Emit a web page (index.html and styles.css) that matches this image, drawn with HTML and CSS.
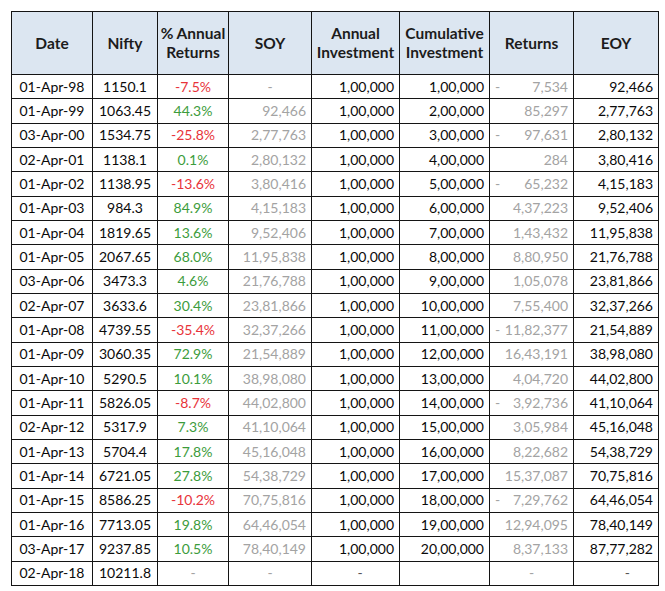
FILE: index.html
```html
<!DOCTYPE html>
<html>
<head>
<meta charset="utf-8">
<link rel="stylesheet" href="styles.css">
</head>
<body>
<table class="sip">
  <colgroup>
    <col class="c-date"><col class="c-nifty"><col class="c-pct"><col class="c-soy">
    <col class="c-ann"><col class="c-cum"><col class="c-ret"><col class="c-eoy">
  </colgroup>
  <thead>
    <tr>
      <th>Date</th><th>Nifty</th><th>% Annual<br>Returns</th><th>SOY</th>
      <th>Annual<br>Investment</th><th>Cumulative<br>Investment</th><th>Returns</th><th>EOY</th>
    </tr>
  </thead>
  <tbody>
    <tr><td class="ctr">01-Apr-98</td><td class="ctr">1150.1</td><td class="ctr neg">-7.5%</td><td class="ctr gray">-</td><td class="num">1,00,000</td><td class="num">1,00,000</td><td class="num gray"><span class="acc"><span>-</span><span>7,534</span></span></td><td class="num">92,466</td></tr>
    <tr><td class="ctr">01-Apr-99</td><td class="ctr">1063.45</td><td class="ctr pos">44.3%</td><td class="num gray">92,466</td><td class="num">1,00,000</td><td class="num">2,00,000</td><td class="num gray">85,297</td><td class="num">2,77,763</td></tr>
    <tr><td class="ctr">03-Apr-00</td><td class="ctr">1534.75</td><td class="ctr neg">-25.8%</td><td class="num gray">2,77,763</td><td class="num">1,00,000</td><td class="num">3,00,000</td><td class="num gray"><span class="acc"><span>-</span><span>97,631</span></span></td><td class="num">2,80,132</td></tr>
    <tr><td class="ctr">02-Apr-01</td><td class="ctr">1138.1</td><td class="ctr pos">0.1%</td><td class="num gray">2,80,132</td><td class="num">1,00,000</td><td class="num">4,00,000</td><td class="num gray">284</td><td class="num">3,80,416</td></tr>
    <tr><td class="ctr">01-Apr-02</td><td class="ctr">1138.95</td><td class="ctr neg">-13.6%</td><td class="num gray">3,80,416</td><td class="num">1,00,000</td><td class="num">5,00,000</td><td class="num gray"><span class="acc"><span>-</span><span>65,232</span></span></td><td class="num">4,15,183</td></tr>
    <tr><td class="ctr">01-Apr-03</td><td class="ctr">984.3</td><td class="ctr pos">84.9%</td><td class="num gray">4,15,183</td><td class="num">1,00,000</td><td class="num">6,00,000</td><td class="num gray">4,37,223</td><td class="num">9,52,406</td></tr>
    <tr><td class="ctr">01-Apr-04</td><td class="ctr">1819.65</td><td class="ctr pos">13.6%</td><td class="num gray">9,52,406</td><td class="num">1,00,000</td><td class="num">7,00,000</td><td class="num gray">1,43,432</td><td class="num">11,95,838</td></tr>
    <tr><td class="ctr">01-Apr-05</td><td class="ctr">2067.65</td><td class="ctr pos">68.0%</td><td class="num gray">11,95,838</td><td class="num">1,00,000</td><td class="num">8,00,000</td><td class="num gray">8,80,950</td><td class="num">21,76,788</td></tr>
    <tr><td class="ctr">03-Apr-06</td><td class="ctr">3473.3</td><td class="ctr pos">4.6%</td><td class="num gray">21,76,788</td><td class="num">1,00,000</td><td class="num">9,00,000</td><td class="num gray">1,05,078</td><td class="num">23,81,866</td></tr>
    <tr><td class="ctr">02-Apr-07</td><td class="ctr">3633.6</td><td class="ctr pos">30.4%</td><td class="num gray">23,81,866</td><td class="num">1,00,000</td><td class="num">10,00,000</td><td class="num gray">7,55,400</td><td class="num">32,37,266</td></tr>
    <tr><td class="ctr">01-Apr-08</td><td class="ctr">4739.55</td><td class="ctr neg">-35.4%</td><td class="num gray">32,37,266</td><td class="num">1,00,000</td><td class="num">11,00,000</td><td class="num gray"><span class="acc"><span>-</span><span>11,82,377</span></span></td><td class="num">21,54,889</td></tr>
    <tr><td class="ctr">01-Apr-09</td><td class="ctr">3060.35</td><td class="ctr pos">72.9%</td><td class="num gray">21,54,889</td><td class="num">1,00,000</td><td class="num">12,00,000</td><td class="num gray">16,43,191</td><td class="num">38,98,080</td></tr>
    <tr><td class="ctr">01-Apr-10</td><td class="ctr">5290.5</td><td class="ctr pos">10.1%</td><td class="num gray">38,98,080</td><td class="num">1,00,000</td><td class="num">13,00,000</td><td class="num gray">4,04,720</td><td class="num">44,02,800</td></tr>
    <tr><td class="ctr">01-Apr-11</td><td class="ctr">5826.05</td><td class="ctr neg">-8.7%</td><td class="num gray">44,02,800</td><td class="num">1,00,000</td><td class="num">14,00,000</td><td class="num gray"><span class="acc"><span>-</span><span>3,92,736</span></span></td><td class="num">41,10,064</td></tr>
    <tr><td class="ctr">02-Apr-12</td><td class="ctr">5317.9</td><td class="ctr pos">7.3%</td><td class="num gray">41,10,064</td><td class="num">1,00,000</td><td class="num">15,00,000</td><td class="num gray">3,05,984</td><td class="num">45,16,048</td></tr>
    <tr><td class="ctr">01-Apr-13</td><td class="ctr">5704.4</td><td class="ctr pos">17.8%</td><td class="num gray">45,16,048</td><td class="num">1,00,000</td><td class="num">16,00,000</td><td class="num gray">8,22,682</td><td class="num">54,38,729</td></tr>
    <tr><td class="ctr">01-Apr-14</td><td class="ctr">6721.05</td><td class="ctr pos">27.8%</td><td class="num gray">54,38,729</td><td class="num">1,00,000</td><td class="num">17,00,000</td><td class="num gray">15,37,087</td><td class="num">70,75,816</td></tr>
    <tr><td class="ctr">01-Apr-15</td><td class="ctr">8586.25</td><td class="ctr neg">-10.2%</td><td class="num gray">70,75,816</td><td class="num">1,00,000</td><td class="num">18,00,000</td><td class="num gray"><span class="acc"><span>-</span><span>7,29,762</span></span></td><td class="num">64,46,054</td></tr>
    <tr><td class="ctr">01-Apr-16</td><td class="ctr">7713.05</td><td class="ctr pos">19.8%</td><td class="num gray">64,46,054</td><td class="num">1,00,000</td><td class="num">19,00,000</td><td class="num gray">12,94,095</td><td class="num">78,40,149</td></tr>
    <tr><td class="ctr">03-Apr-17</td><td class="ctr">9237.85</td><td class="ctr pos">10.5%</td><td class="num gray">78,40,149</td><td class="num">1,00,000</td><td class="num">20,00,000</td><td class="num gray">8,37,133</td><td class="num">87,77,282</td></tr>
    <tr><td class="ctr">02-Apr-18</td><td class="ctr">10211.8</td><td class="ctr gray">-</td><td class="ctr gray">-</td><td class="dash-ann">-</td><td></td><td class="ctr gray">-</td><td class="dash-eoy">-</td></tr>
  </tbody>
</table>
</body>
</html>
```

FILE: styles.css
```css
html, body {
  margin: 0;
  background: #ffffff;
}
body {
  padding: 11px 0 0 11px;
  font-family: Lato, "Open Sans", "Liberation Sans", sans-serif;
  font-size: 14px;
  color: #0a0a0a;
}
.sip {
  border-collapse: collapse;
  table-layout: fixed;
  width: 647px;
}
.c-date { width: 81px; }
.c-nifty { width: 65px; }
.c-pct { width: 71px; }
.c-soy { width: 83px; }
.c-ann { width: 88px; }
.c-cum { width: 90px; }
.c-ret { width: 84px; }
.c-eoy { width: 85px; }

.sip th, .sip td {
  border: 1px solid #141414;
  white-space: nowrap;
  overflow: hidden;
}
.sip thead tr {
  height: 63px;
}
.sip th {
  background: #dce6f1;
  padding: 0 1px;
  font-weight: 700;
  font-size: 15.5px;
  line-height: 19px;
  text-align: center;
  vertical-align: middle;
  color: #1c1c1c;
}
.sip tbody tr {
  height: 24.33px;
}
.sip td {
  padding: 0 5px;
  line-height: 18px;
  vertical-align: middle;
}
.ctr { text-align: center; }
.num { text-align: right; }
.gray { color: #a3a3a3; }
.neg { color: #e8333a; }
.pos { color: #3c9c3c; }
.acc {
  display: flex;
  justify-content: space-between;
}
.sip td.dash-ann {
  text-align: center;
  color: #555;
  padding-left: 14px;
}
.sip td.dash-eoy {
  text-align: right;
  padding-right: 28px;
  color: #555;
}
```
